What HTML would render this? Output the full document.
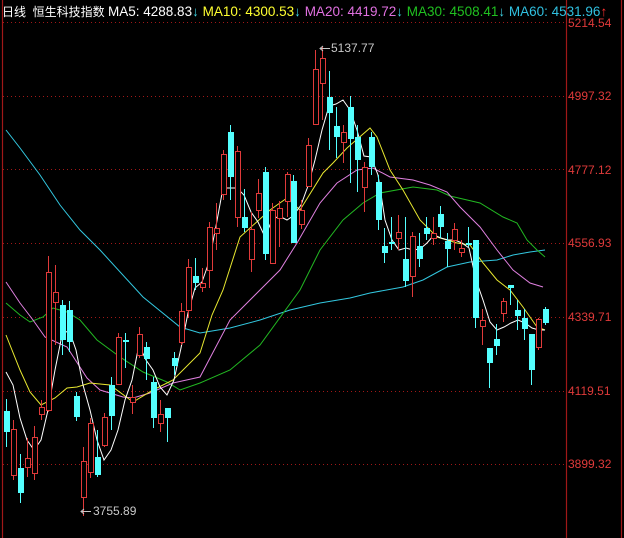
<!DOCTYPE html>
<html><head><meta charset="utf-8"><style>
html,body{margin:0;padding:0;background:#000;width:624px;height:538px;overflow:hidden}
.hd{position:absolute;left:2px;top:3px;font:12px "Liberation Sans","Noto Sans CJK SC",sans-serif;white-space:nowrap}
.ma{font-size:13.5px}
.ax{position:absolute;left:568px;font:12px "Liberation Sans",sans-serif;color:#e03a3a}
</style></head><body>
<svg width="624" height="538" style="position:absolute;left:0;top:0">
<g stroke="#a01818" stroke-width="1" stroke-dasharray="1,3">
<line x1="3" y1="22.5" x2="566" y2="22.5"/><line x1="3" y1="96.5" x2="566" y2="96.5"/><line x1="3" y1="169.5" x2="566" y2="169.5"/><line x1="3" y1="243.5" x2="566" y2="243.5"/><line x1="3" y1="317.5" x2="566" y2="317.5"/><line x1="3" y1="391.5" x2="566" y2="391.5"/><line x1="3" y1="464.5" x2="566" y2="464.5"/>
</g>
<g stroke="#a01818" stroke-width="1.2"><line x1="2.5" y1="0" x2="2.5" y2="538"/><line x1="566.5" y1="0" x2="566.5" y2="538"/><line x1="621.5" y1="0" x2="621.5" y2="538"/></g>
<g fill="none" stroke-width="1">
<polyline stroke="#33c8e0" points="6,130 20,148 40,175 60,205 80,230 100,250 143,297 180,327 200,333 230,328 260,320 290,310 320,303 350,298 370,293 403,287 423,280 447,267 470,262 497,260 513,255 530,252 545,250"/>
<polyline stroke="#22b822" points="6,303 20,315 30,322 43,317 53,308 67,312 80,320 97,340 120,357 143,372 167,382 180,390 200,383 230,370 260,345 300,290 320,250 343,220 363,203 380,193 413,187 437,190 450,196 480,203 503,217 517,223 527,240 537,250 545,257"/>
<polyline stroke="#e080e0" points="6,282 20,303 33,320 45,337 67,347 87,378 100,390 123,397 133,398 150,393 173,383 200,377 230,320 260,290 280,270 297,243 320,203 337,183 357,170 373,168 390,177 413,180 430,185 447,192 460,207 480,227 497,250 513,270 530,283 543,287"/>
<polyline stroke="#e8e830" points="6,335 20,370 30,392 41,405 55,398 67,388 77,387 90,383 110,385 133,402 153,390 173,380 200,353 212,315 223,290 240,237 270,210 287,198 300,210 323,173 333,163 347,148 370,128 377,137 390,170 403,190 420,220 437,237 457,243 470,245 483,263 497,280 510,290 523,307 537,327 545,330"/>
<polyline stroke="#ffffff" points="6,372 13,385 20,418 27,440 34,450 41,440 48,410 55,370 62,335 69,330 76,350 83,385 90,410 97,440 104,460 111,450 118,430 125,400 132,380 139,345 146,360 153,370 160,387 167,395 174,380 181,348 188,313 195,288 202,282 209,262 216,226 223,188 230,188 237,188 244,195 251,212 258,222 265,237 272,220 279,216 287,220 293,216 301,205 308,186 315,160 322,130 329,106 336,104 343,100 350,110 357,130 364,156 371,157 378,175 385,220 392,240 399,250 406,248 413,250 420,249 427,243 434,235 441,238 448,240 455,240 462,243 469,248 476,280 483,300 490,322 497,330 504,327 511,323 518,320 525,323 532,328 539,330 545,330"/>
</g>
<g id="c"></g>
<g fill="none" stroke="#c8c8c8"><line x1="320" y1="48.5" x2="330" y2="48.5"/><line x1="81" y1="511.5" x2="91" y2="511.5"/><polyline points="323,46 320,48.5 323,51"/><polyline points="84,509 81,511.5 84,514"/></g>
<text x="331" y="52" fill="#c8c8c8" font-family="Liberation Sans" font-size="12">5137.77</text>
<text x="93" y="515" fill="#c8c8c8" font-family="Liberation Sans" font-size="12">3755.89</text>
</svg>
<div class="hd"><span style="color:#fff">日线 &nbsp;恒生科技指数 </span><span class="ma"><span style="color:#fff">MA5: 4288.83</span><span style="color:#40d8e8">↓</span> <span style="color:#ffff30">MA10: 4300.53</span><span style="color:#40d8e8">↓</span> <span style="color:#e070e0">MA20: 4419.72</span><span style="color:#40d8e8">↓</span> <span style="color:#20c020">MA30: 4508.41</span><span style="color:#40d8e8">↓</span> <span style="color:#30c0e0">MA60: 4531.96</span><span style="color:#ff3030">↑</span></span></div>
<div class="ax" style="top:16px">5214.54</div>
<div class="ax" style="top:89px">4997.32</div>
<div class="ax" style="top:163px">4777.12</div>
<div class="ax" style="top:236px">4556.93</div>
<div class="ax" style="top:310px">4339.71</div>
<div class="ax" style="top:384px">4119.51</div>
<div class="ax" style="top:457px">3899.32</div>
<script>
var d=[[6,'c',411,432,399,447],[13,'r',429,475,420,480],[20,'c',468,493,454,503],[27,'r',458,467,438,477],[34,'r',437,473,426,480],[41,'r',407,414,400,420],[48,'r',272,410,256,412],[55,'r',292,302,265,345],[62,'c',305,340,300,355],[69,'c',310,342,301,352],[76,'c',396,417,392,421],[83,'r',461,497,447,516],[90,'r',423,472,418,478],[97,'c',457,475,430,477],[104,'r',417,445,413,447],[111,'c',385,416,377,430],[118,'r',337,384,333,385],[125,'c',340,342,333,368],[132,'r',397,402,385,414],[139,'r',334,355,327,358],[146,'c',347,359,342,380],[153,'c',382,418,377,428],[160,'r',414,423,400,432],[167,'c',408,418,408,442],[174,'c',358,366,352,375],[181,'r',311,342,303,345],[188,'r',267,310,259,318],[195,'c',276,283,258,290],[202,'r',283,287,268,292],[209,'r',227,270,222,288],[216,'r',228,233,203,250],[223,'r',154,194,150,200],[230,'c',132,177,125,200],[237,'r',151,217,146,227],[244,'c',217,228,189,232],[251,'r',229,259,212,272],[258,'r',193,210,179,218],[265,'c',172,254,167,260],[272,'r',210,263,203,264],[279,'r',208,218,201,247],[287,'r',174,201,172,217],[293,'c',181,243,175,243],[301,'r',210,224,200,229],[308,'r',145,186,138,187],[315,'r',69,124,50,124],[322,'r',58,83,47,120],[329,'c',97,113,71,150],[336,'c',126,137,107,158],[343,'r',132,142,125,163],[350,'c',107,139,96,183],[357,'c',137,160,125,192],[364,'r',167,187,162,212],[371,'c',137,167,132,175],[378,'c',182,220,175,230],[384,'c',246,253,228,263],[391,'c',242,244,217,250],[398,'r',232,238,215,250],[405,'c',259,281,217,287],[412,'r',236,276,232,297],[419,'c',246,259,233,267],[426,'c',228,234,217,240],[433,'r',233,238,217,245],[440,'c',214,227,206,238],[447,'c',241,249,233,267],[454,'r',229,240,223,250],[461,'r',248,252,240,257],[468,'c',243,245,227,247],[475,'c',240,318,240,328],[482,'r',320,326,309,345],[489,'c',348,363,348,388],[496,'c',339,346,324,355],[503,'r',301,313,298,322],[510,'c',285,288,285,305],[517,'c',310,316,300,330],[524,'c',318,329,309,340],[531,'c',334,370,334,385],[538,'r',319,347,318,350],[545,'c',309,323,307,325]];
var s='';d.forEach(function(a){var x=a[0],col=a[1]=='r'?'#e03a3a':'#54ffff';
s+='<line x1="'+(x+.5)+'" y1="'+a[4]+'" x2="'+(x+.5)+'" y2="'+a[5]+'" stroke="'+col+'"/>';
if(a[1]=='r')s+='<rect x="'+(x-2)+'.5" y="'+(a[2]+.5)+'" width="5" height="'+Math.max(1,a[3]-a[2])+'" fill="#000" stroke="'+col+'"/>';
else s+='<rect x="'+(x-2)+'" y="'+a[2]+'" width="6" height="'+Math.max(2,a[3]-a[2])+'" fill="'+col+'"/>';});
document.getElementById('c').innerHTML=s;
</script>
</body></html>
